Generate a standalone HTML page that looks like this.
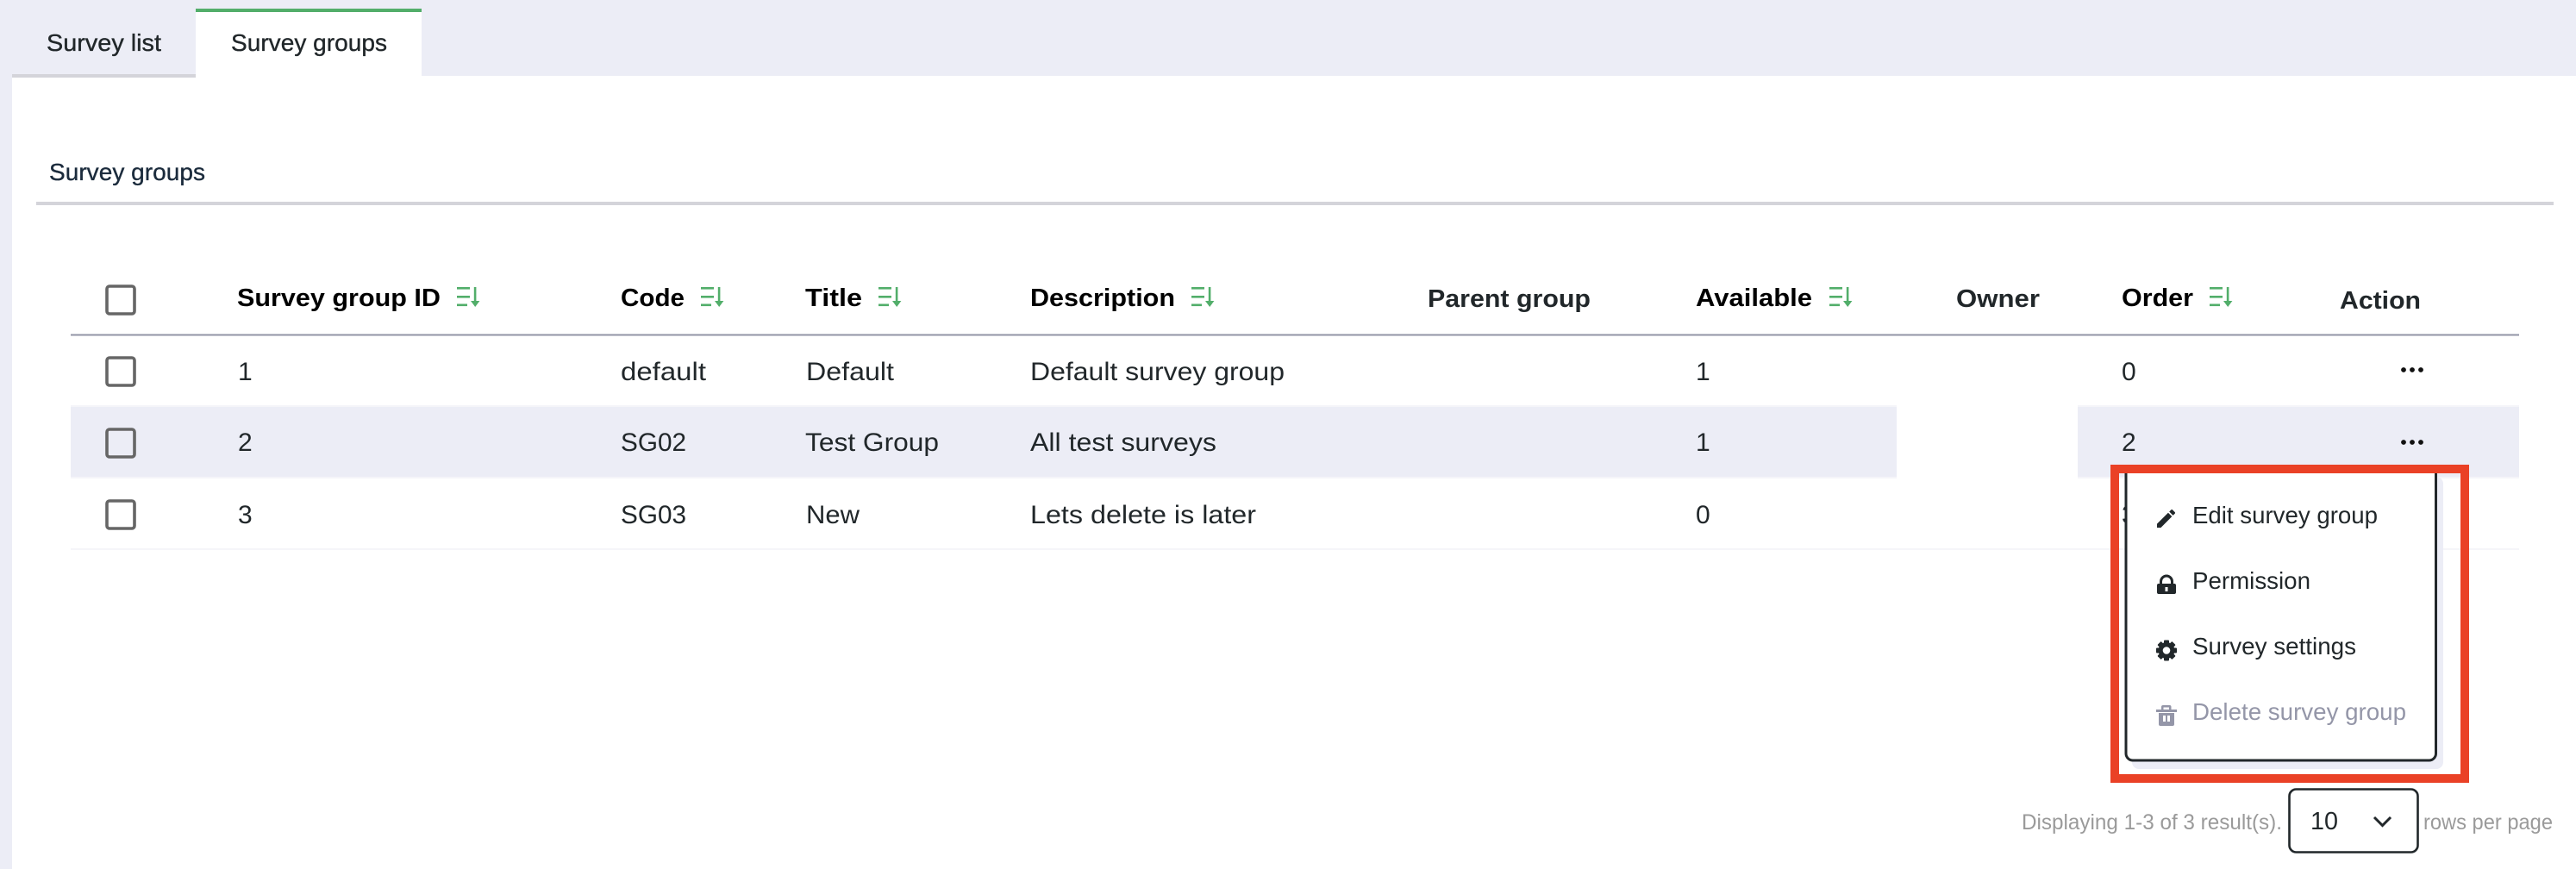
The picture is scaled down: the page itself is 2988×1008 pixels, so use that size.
<!DOCTYPE html>
<html lang="en">
<head>
<meta charset="utf-8">
<title>Survey groups</title>
<style>
html,body{margin:0;padding:0;background:#fff;width:2988px;height:1008px;overflow:hidden}
svg{display:block}
text{font-family:"Liberation Sans",sans-serif;font-kerning:normal}
.r{font-size:30px;fill:#21272a}
.h{font-size:29px;font-weight:700;fill:#000}
.g{font-size:29px;font-weight:700;fill:#21272a}
.t{font-size:28px;fill:#21272a;stroke:#21272a;stroke-width:.35px}
.m{font-size:28px;fill:#21272a}
.f{font-size:25px;fill:#9a9a9a}
.cb{fill:none;stroke:#666;stroke-width:3.6}
</style>
</head>
<body>
<svg width="2988" height="1008" viewBox="0 0 2988 1008" xmlns="http://www.w3.org/2000/svg">
<defs>
<g id="s" fill="#52ae6a">
<rect x="0" y="0" width="15" height="2.6"/>
<rect x="0" y="10" width="15" height="2.6"/>
<rect x="0" y="19.5" width="12" height="2.6"/>
<rect x="19.8" y="0" width="2.6" height="18"/>
<path d="M16 16h10.4l-5.2 7z"/>
</g>
<g id="d" fill="#111">
<circle cx="2" cy="0" r="2.9"/><circle cx="12" cy="0" r="2.9"/><circle cx="22" cy="0" r="2.9"/>
</g>
</defs>

<!-- page frame -->
<rect x="0" y="0" width="2988" height="88" fill="#ecedf6"/>
<rect x="0" y="0" width="14" height="1008" fill="#ecedf6"/>
<rect x="14" y="86" width="213" height="4" fill="#d4d4da"/>
<rect x="227" y="10" width="262" height="80" fill="#fff"/>
<rect x="227" y="10" width="262" height="4" fill="#52ae6a"/>

<text class="t" x="54" y="59" textLength="133" lengthAdjust="spacingAndGlyphs">Survey list</text>
<text class="t" x="268" y="59" textLength="181" lengthAdjust="spacingAndGlyphs">Survey groups</text>

<text class="t" x="57" y="209" textLength="181" lengthAdjust="spacingAndGlyphs" style="fill:#1b2b3c;stroke:#1b2b3c">Survey groups</text>
<rect x="42" y="234" width="2920" height="4" fill="#d4d4da"/>

<!-- header -->
<rect x="124" y="332" width="32" height="32" rx="3" class="cb"/>
<text class="h" x="275" y="355" textLength="236" lengthAdjust="spacingAndGlyphs">Survey group ID</text>
<use href="#s" x="530" y="333"/>
<text class="h" x="720" y="355" textLength="74" lengthAdjust="spacingAndGlyphs">Code</text>
<use href="#s" x="813" y="333"/>
<text class="h" x="934" y="355" textLength="66" lengthAdjust="spacingAndGlyphs">Title</text>
<use href="#s" x="1019" y="333"/>
<text class="h" x="1195" y="355" textLength="168" lengthAdjust="spacingAndGlyphs">Description</text>
<use href="#s" x="1382" y="333"/>
<text class="g" x="1656" y="356" textLength="189" lengthAdjust="spacingAndGlyphs">Parent group</text>
<text class="h" x="1967" y="355" textLength="135" lengthAdjust="spacingAndGlyphs">Available</text>
<use href="#s" x="2122" y="333"/>
<text class="g" x="2269" y="356" textLength="97" lengthAdjust="spacingAndGlyphs">Owner</text>
<text class="h" x="2461" y="355" textLength="83" lengthAdjust="spacingAndGlyphs">Order</text>
<use href="#s" x="2563" y="333"/>
<text class="g" x="2714" y="358" textLength="94" lengthAdjust="spacingAndGlyphs">Action</text>
<rect x="82" y="387.5" width="2840" height="2" fill="#9294a6"/>

<!-- row separators and backgrounds -->
<rect x="82" y="470" width="2118" height="2" fill="#f5f5f9"/>
<rect x="2410" y="470" width="512" height="2" fill="#f5f5f9"/>
<rect x="82" y="472" width="2118" height="81" fill="#ecedf6"/>
<rect x="2410" y="472" width="512" height="81" fill="#ecedf6"/>
<rect x="82" y="553" width="2118" height="2" fill="#f5f5f9"/>
<rect x="2410" y="553" width="512" height="2" fill="#f5f5f9"/>
<rect x="82" y="636" width="2840" height="2" fill="#f5f5f9"/>

<!-- row 1 -->
<rect x="124" y="415" width="32" height="32" rx="3" class="cb"/>
<text class="r" x="276" y="441">1</text>
<text class="r" x="720" y="441" textLength="99" lengthAdjust="spacingAndGlyphs">default</text>
<text class="r" x="935" y="441" textLength="102" lengthAdjust="spacingAndGlyphs">Default</text>
<text class="r" x="1195" y="441" textLength="295" lengthAdjust="spacingAndGlyphs">Default survey group</text>
<text class="r" x="1967" y="441">1</text>
<text class="r" x="2461" y="441">0</text>
<use href="#d" x="2786" y="429"/>

<!-- row 2 -->
<rect x="124" y="498" width="32" height="32" rx="3" class="cb"/>
<text class="r" x="276" y="523">2</text>
<text class="r" x="720" y="523" textLength="76" lengthAdjust="spacingAndGlyphs">SG02</text>
<text class="r" x="934" y="523" textLength="155" lengthAdjust="spacingAndGlyphs">Test Group</text>
<text class="r" x="1195" y="523" textLength="216" lengthAdjust="spacingAndGlyphs">All test surveys</text>
<text class="r" x="1967" y="523">1</text>
<text class="r" x="2461" y="523">2</text>
<use href="#d" x="2786" y="513"/>

<!-- row 3 -->
<rect x="124" y="581" width="32" height="32" rx="3" class="cb"/>
<text class="r" x="276" y="607">3</text>
<text class="r" x="720" y="607" textLength="76" lengthAdjust="spacingAndGlyphs">SG03</text>
<text class="r" x="935" y="607" textLength="62" lengthAdjust="spacingAndGlyphs">New</text>
<text class="r" x="1195" y="607" textLength="262" lengthAdjust="spacingAndGlyphs">Lets delete is later</text>
<text class="r" x="1967" y="607">0</text>
<text class="r" x="2461" y="607">3</text>

<!-- dropdown -->
<rect x="2473" y="553" width="361" height="339" rx="8" fill="#ecedf6"/>
<path d="M2466 542V874a8 8 0 0 0 8 8H2817.500a8 8 0 0 0 8-8V542z" fill="#fff"/>
<path d="M2466 542V874a8 8 0 0 0 8 8H2817.500a8 8 0 0 0 8-8V542" fill="none" stroke="#21272a" stroke-width="3"/>

<!-- pencil -->
<path transform="translate(2498.5 587.5) scale(1.17)" fill="#21272a" d="M3 17.25V21h3.75L17.81 9.94l-3.75-3.75L3 17.25zM20.71 7.04c.39-.39.39-1.02 0-1.41l-2.34-2.34c-.39-.39-1.02-.39-1.41 0l-1.83 1.83 3.75 3.75 1.83-1.83z"/>
<text class="m" x="2543" y="607" textLength="215" lengthAdjust="spacingAndGlyphs">Edit survey group</text>

<!-- lock -->
<path fill="#21272a" fill-rule="evenodd" d="M2504 677h18a2 2 0 0 1 2 2v8a2 2 0 0 1-2 2h-18a2 2 0 0 1-2-2v-8a2 2 0 0 1 2-2zM2511.5 681v5h3v-5z"/>
<path fill="none" stroke="#21272a" stroke-width="3" d="M2506.5 678v-3.500a6.500 6.500 0 0 1 13 0V678"/>
<text class="m" x="2543" y="683" textLength="137" lengthAdjust="spacingAndGlyphs">Permission</text>

<!-- gear -->
<g transform="translate(2513 754.500)" fill="#21272a">
<circle r="9.500"/>
<rect x="-3" y="-12" width="6" height="24" rx="1"/>
<rect x="-3" y="-12" width="6" height="24" rx="1" transform="rotate(45)"/>
<rect x="-3" y="-12" width="6" height="24" rx="1" transform="rotate(90)"/>
<rect x="-3" y="-12" width="6" height="24" rx="1" transform="rotate(135)"/>
<circle r="4.300" fill="#fff"/>
</g>
<text class="m" x="2543" y="759" textLength="190" lengthAdjust="spacingAndGlyphs">Survey settings</text>

<!-- trash -->
<path fill="#9496a8" fill-rule="evenodd" d="M2507 823v-3a2 2 0 0 1 2-2h7.500a2 2 0 0 1 2 2v3h6.500v3h-24v-3zM2509.500 823h6.500v-2.500h-6.500zM2504 827h18v13a2 2 0 0 1-2 2h-14a2 2 0 0 1-2-2zM2509 830v7h3v-7zM2514 830v7h3v-7z"/>
<text class="m" x="2543" y="835" textLength="248" lengthAdjust="spacingAndGlyphs" style="fill:#9496a8">Delete survey group</text>

<!-- annotation box -->
<rect x="2453" y="544" width="406" height="359" fill="none" stroke="#ea4126" stroke-width="10"/>

<!-- footer -->
<text class="f" x="2345" y="962" textLength="302" lengthAdjust="spacingAndGlyphs">Displaying 1-3 of 3 result(s).</text>
<rect x="2655.500" y="915.500" width="149" height="73" rx="8" fill="#fff" stroke="#21272a" stroke-width="2.600"/>
<text x="2680" y="962" textLength="32" lengthAdjust="spacingAndGlyphs" style="font-size:29px;fill:#21272a">10</text>
<path d="M2754 948l9.500 9.500 9.500-9.500" fill="none" stroke="#21272a" stroke-width="3"/>
<text class="f" x="2811" y="962" textLength="150" lengthAdjust="spacingAndGlyphs">rows per page</text>
</svg>
</body>
</html>
